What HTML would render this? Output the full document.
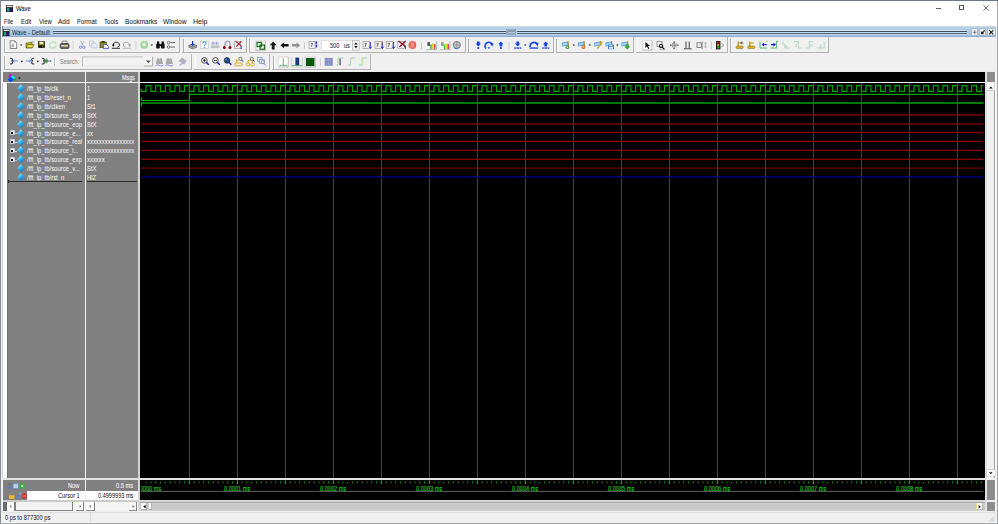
<!DOCTYPE html>
<html><head><meta charset="utf-8"><title>Wave</title>
<style>
html,body{margin:0;padding:0}
body{width:998px;height:524px;overflow:hidden;position:relative;background:#f0f0f0;font-family:"Liberation Sans",sans-serif}
.a{position:absolute}
.t{position:absolute;white-space:nowrap;line-height:1}
</style></head><body>
<div class="a" style="left:0px;top:0px;width:998px;height:26px;background:#fff"></div><div class="a" style="left:0px;top:0px;width:998px;height:1px;background:#6d7a86"></div><div class="a" style="left:0px;top:0px;width:1px;height:524px;background:#858b92"></div><div class="a" style="left:996.6px;top:1px;width:1.4px;height:524px;background:#a4a6ac"></div><svg class="a" style="left:5.5px;top:4.6px" width="7.2" height="7.2" viewBox="0 0 7.2 7.2"><rect x="0" y="0" width="7.2" height="7.2" fill="#1b1b1b"/><rect x="0.6" y="0.6" width="6" height="1.6" fill="#e8e8e8"/><rect x="1" y="3" width="2.6" height="3.6" fill="#20a080"/><rect x="3.6" y="3.6" width="2.8" height="3" fill="#2a1a80"/></svg><div class="t" style="left:15.8px;top:6px;font-size:6.3px;color:#111;transform:scaleX(0.9326);transform-origin:0 0;-webkit-text-stroke:0.05px #111">Wave</div><div class="a" style="left:935.5px;top:7.7px;width:5.4px;height:0.8px;background:#5a5a5a"></div><div class="a" style="left:959px;top:5.2px;width:5.3px;height:5.3px;border:0.8px solid #5a5a5a;box-sizing:border-box"></div><svg class="a" style="left:982.6px;top:4.9px" width="6" height="6" viewBox="0 0 6 6"><path d="M0.4 0.4L5.6 5.6M5.6 0.4L0.4 5.6" stroke="#505050" stroke-width="0.8"/></svg><div class="t" style="left:4.1px;top:19px;font-size:6.6px;color:#1a1a1a;transform:scaleX(0.8744);transform-origin:0 0;-webkit-text-stroke:0.05px #1a1a1a">File</div><div class="t" style="left:20.9px;top:19px;font-size:6.6px;color:#1a1a1a;transform:scaleX(0.8968);transform-origin:0 0;-webkit-text-stroke:0.05px #1a1a1a">Edit</div><div class="t" style="left:38.6px;top:19px;font-size:6.6px;color:#1a1a1a;transform:scaleX(0.8952);transform-origin:0 0;-webkit-text-stroke:0.05px #1a1a1a">View</div><div class="t" style="left:58.4px;top:19px;font-size:6.6px;color:#1a1a1a;transform:scaleX(0.9877);transform-origin:0 0;-webkit-text-stroke:0.05px #1a1a1a">Add</div><div class="t" style="left:77.2px;top:19px;font-size:6.6px;color:#1a1a1a;transform:scaleX(0.9473);transform-origin:0 0;-webkit-text-stroke:0.05px #1a1a1a">Format</div><div class="t" style="left:104.2px;top:19px;font-size:6.6px;color:#1a1a1a;transform:scaleX(0.9281);transform-origin:0 0;-webkit-text-stroke:0.05px #1a1a1a">Tools</div><div class="t" style="left:125.2px;top:19px;font-size:6.6px;color:#1a1a1a;transform:scaleX(0.9785);transform-origin:0 0;-webkit-text-stroke:0.05px #1a1a1a">Bookmarks</div><div class="t" style="left:163.3px;top:19px;font-size:6.6px;color:#1a1a1a;transform:scaleX(1.0011);transform-origin:0 0;-webkit-text-stroke:0.05px #1a1a1a">Window</div><div class="t" style="left:192.8px;top:19px;font-size:6.6px;color:#1a1a1a;transform:scaleX(1.0608);transform-origin:0 0;-webkit-text-stroke:0.05px #1a1a1a">Help</div><div class="a" style="left:1.5px;top:26px;width:994.5px;height:11px;background:linear-gradient(#bad2ea,#a2c0de)"></div><div class="a" style="left:1.5px;top:25.7px;width:994.5px;height:0.9px;background:#cfd6dc"></div><div class="a" style="left:1.5px;top:36.2px;width:994.5px;height:0.8px;background:#91adc9"></div><div class="a" style="left:1.5px;top:26px;width:1px;height:11px;background:#7d8e9e"></div><svg class="a" style="left:3.1px;top:28.8px" width="6.5" height="7.2" viewBox="0 0 6.5 7.2"><rect x="0" y="0" width="6.5" height="7.2" fill="#1b1b1b"/><rect x="0.6" y="0.6" width="5.3" height="1.5" fill="#e8e8e8"/><rect x="0.8" y="2.8" width="2.4" height="3.8" fill="#20a080"/><rect x="3.2" y="3.4" width="2.6" height="3.2" fill="#2a1a80"/></svg><div class="t" style="left:12.2px;top:30px;font-size:6.3px;color:#222a34;transform:scaleX(0.9148);transform-origin:0 0;">Wave - Default</div><div class="a" style="left:53.3px;top:29.9px;width:452.7px;height:1.0px;background:#d4e4f4"></div><div class="a" style="left:53.3px;top:30.6px;width:452.7px;height:1.2px;background:#3e4e62"></div><div class="a" style="left:53.3px;top:31.8px;width:452.7px;height:1.1px;background:#c4dcf2"></div><div class="a" style="left:53.3px;top:32.9px;width:452.7px;height:1.5px;background:#56687a"></div><div class="a" style="left:53.3px;top:34.4px;width:452.7px;height:0.9px;background:#b8cfe6"></div><div class="a" style="left:516.5px;top:29.9px;width:450.8px;height:1.0px;background:#d4e4f4"></div><div class="a" style="left:516.5px;top:30.6px;width:450.8px;height:1.2px;background:#3e4e62"></div><div class="a" style="left:516.5px;top:31.8px;width:450.8px;height:1.1px;background:#c4dcf2"></div><div class="a" style="left:516.5px;top:32.9px;width:450.8px;height:1.5px;background:#56687a"></div><div class="a" style="left:516.5px;top:34.4px;width:450.8px;height:0.9px;background:#b8cfe6"></div><div class="a" style="left:506.2px;top:29.2px;width:10.2px;height:6.2px;background:#a4c0dc;box-shadow:inset 0 0 0 0.6px #8aa2bc"></div><div class="a" style="left:507.4px;top:30.4px;width:7.8px;height:3.8px;background:#8a9cb2"></div><div class="a" style="left:508px;top:31.6px;width:6.6px;height:1px;background:#b6c8dc"></div><div class="a" style="left:971.7px;top:28.9px;width:5.4px;height:6.5px;background:#f2f2f2;box-shadow:0 0 0 0.5px #9aa8b6"></div><div class="a" style="left:980.1px;top:28.9px;width:5.4px;height:6.5px;background:#f2f2f2;box-shadow:0 0 0 0.5px #9aa8b6"></div><div class="a" style="left:988.1px;top:28.9px;width:6.5px;height:6.5px;background:#f2f2f2;box-shadow:0 0 0 0.5px #9aa8b6"></div><svg class="a" style="left:971.7px;top:28.9px" width="5.4" height="6.5" viewBox="0 0 5.4 6.5"><path d="M2.7 1.2V5.3M0.8 3.25H4.6" stroke="#666" stroke-width="0.8"/></svg><svg class="a" style="left:980.1px;top:28.9px" width="5.4" height="6.5" viewBox="0 0 5.4 6.5"><path d="M1 2.6H3.6V5.2H1Z" fill="#222"/><path d="M2.4 3.8L4.6 1.4M3.4 1.3H4.7V2.6" stroke="#222" stroke-width="0.8" fill="none"/></svg><svg class="a" style="left:988.1px;top:28.9px" width="6.5" height="6.5" viewBox="0 0 6.5 6.5"><path d="M1.2 1.2L5.3 5.3M5.3 1.2L1.2 5.3" stroke="#111" stroke-width="1.1"/></svg><div class="a" style="left:1.5px;top:37px;width:994.5px;height:34px;background:#f0f0f0"></div><div class="a" style="left:3.9px;top:37.2px;width:175.9px;height:16.099999999999994px;border-right:1px solid #b4b4b4;border-bottom:1px solid #b4b4b4;box-sizing:border-box;background:#f0f0f0"></div><div class="a" style="left:4.4px;top:38.7px;width:0.8px;height:13.099999999999994px;background:#b0b0b0"></div><div class="a" style="left:5.2px;top:38.7px;width:0.8px;height:13.099999999999994px;background:#fbfbfb"></div><div class="a" style="left:182.3px;top:37.2px;width:64.6px;height:16.099999999999994px;border-right:1px solid #b4b4b4;border-bottom:1px solid #b4b4b4;box-sizing:border-box;background:#f0f0f0"></div><div class="a" style="left:182.8px;top:38.7px;width:0.8px;height:13.099999999999994px;background:#b0b0b0"></div><div class="a" style="left:183.60000000000002px;top:38.7px;width:0.8px;height:13.099999999999994px;background:#fbfbfb"></div><div class="a" style="left:248.9px;top:37.2px;width:217.20000000000002px;height:16.099999999999994px;border-right:1px solid #b4b4b4;border-bottom:1px solid #b4b4b4;box-sizing:border-box;background:#f0f0f0"></div><div class="a" style="left:249.4px;top:38.7px;width:0.8px;height:13.099999999999994px;background:#b0b0b0"></div><div class="a" style="left:250.20000000000002px;top:38.7px;width:0.8px;height:13.099999999999994px;background:#fbfbfb"></div><div class="a" style="left:467.3px;top:37.2px;width:86.69999999999999px;height:16.099999999999994px;border-right:1px solid #b4b4b4;border-bottom:1px solid #b4b4b4;box-sizing:border-box;background:#f0f0f0"></div><div class="a" style="left:467.8px;top:38.7px;width:0.8px;height:13.099999999999994px;background:#b0b0b0"></div><div class="a" style="left:468.6px;top:38.7px;width:0.8px;height:13.099999999999994px;background:#fbfbfb"></div><div class="a" style="left:555.6px;top:37.2px;width:78.5px;height:16.099999999999994px;border-right:1px solid #b4b4b4;border-bottom:1px solid #b4b4b4;box-sizing:border-box;background:#f0f0f0"></div><div class="a" style="left:556.1px;top:38.7px;width:0.8px;height:13.099999999999994px;background:#b0b0b0"></div><div class="a" style="left:556.9px;top:38.7px;width:0.8px;height:13.099999999999994px;background:#fbfbfb"></div><div class="a" style="left:636px;top:37.2px;width:92px;height:16.099999999999994px;border-right:1px solid #b4b4b4;border-bottom:1px solid #b4b4b4;box-sizing:border-box;background:#f0f0f0"></div><div class="a" style="left:636.5px;top:38.7px;width:0.8px;height:13.099999999999994px;background:#b0b0b0"></div><div class="a" style="left:637.3px;top:38.7px;width:0.8px;height:13.099999999999994px;background:#fbfbfb"></div><div class="a" style="left:729.5px;top:37.2px;width:99.39999999999998px;height:16.099999999999994px;border-right:1px solid #b4b4b4;border-bottom:1px solid #b4b4b4;box-sizing:border-box;background:#f0f0f0"></div><div class="a" style="left:730.0px;top:38.7px;width:0.8px;height:13.099999999999994px;background:#b0b0b0"></div><div class="a" style="left:730.8px;top:38.7px;width:0.8px;height:13.099999999999994px;background:#fbfbfb"></div><div class="a" style="left:3.5px;top:54.2px;width:188.3px;height:16.299999999999997px;border-right:1px solid #b4b4b4;border-bottom:1px solid #b4b4b4;box-sizing:border-box;background:#f0f0f0"></div><div class="a" style="left:4.0px;top:55.7px;width:0.8px;height:13.299999999999997px;background:#b0b0b0"></div><div class="a" style="left:4.8px;top:55.7px;width:0.8px;height:13.299999999999997px;background:#fbfbfb"></div><div class="a" style="left:194px;top:54.2px;width:76px;height:16.299999999999997px;border-right:1px solid #b4b4b4;border-bottom:1px solid #b4b4b4;box-sizing:border-box;background:#f0f0f0"></div><div class="a" style="left:194.5px;top:55.7px;width:0.8px;height:13.299999999999997px;background:#b0b0b0"></div><div class="a" style="left:195.3px;top:55.7px;width:0.8px;height:13.299999999999997px;background:#fbfbfb"></div><div class="a" style="left:272.3px;top:54.2px;width:98.80000000000001px;height:16.299999999999997px;border-right:1px solid #b4b4b4;border-bottom:1px solid #b4b4b4;box-sizing:border-box;background:#f0f0f0"></div><div class="a" style="left:272.8px;top:55.7px;width:0.8px;height:13.299999999999997px;background:#b0b0b0"></div><div class="a" style="left:273.6px;top:55.7px;width:0.8px;height:13.299999999999997px;background:#fbfbfb"></div><!--ICONS--><svg class="a" style="left:0;top:0" width="998" height="524"><path d="M10.2,40.8 H14.8 L16.7,42.7 V48.5 H10.2 Z" fill="#fcfcfc" stroke="#6a6a6a" stroke-width="0.8"/><path d="M14.6,40.8 V42.9 H16.7" fill="none" stroke="#8a8a8a" stroke-width="0.6"/><path d="M11.6,47.3 L12.8,43.6 L14,47.3 M12.1,46 H13.6" fill="none" stroke="#707070" stroke-width="0.6"/><path d="M19.9,44.5 H22.5 L21.2,46.099999999999994 Z" fill="#222"/><path d="M26,43 H29 L29.6,42.3 H32 V47.8 H26 Z" fill="#c8c010" stroke="#3a3a10" stroke-width="0.6"/><path d="M26.3,47.8 L27.6,44.6 H34 L32.4,47.8 Z" fill="#e8e040" stroke="#3a3a10" stroke-width="0.6"/><path d="M32.3,41.2 L33.6,42.2 M33.2,40.8 V42" stroke="#666" stroke-width="0.5"/><rect x="38.1" y="41.2" width="6.8" height="6.6" fill="#1a1a00"/><rect x="38.8" y="41.8" width="5.4" height="3.6" fill="#8a8400"/><rect x="39.6" y="41.8" width="3.6" height="2.2" fill="#f4f4e8"/><rect x="40" y="46" width="3" height="1.6" fill="#111"/><rect x="42.4" y="46.2" width="0.7" height="1" fill="#ddd"/><path d="M49.4,45 A3.6 3.3 0 0 1 56,43.6" fill="none" stroke="#c0e2c0" stroke-width="1.5"/><path d="M56.4,45 A3.6 3.3 0 0 1 49.8,46.6" fill="none" stroke="#c0e2c0" stroke-width="1.5"/><path d="M54.6,42 L57.2,42.6 L55.8,44.8 Z M51.2,48.3 L48.6,47.6 L50,45.4 Z" fill="#c0e2c0"/><path d="M62.4,41 H66.8 L67.4,44 H61.8 Z" fill="#e8e8e8" stroke="#4a4a4a" stroke-width="0.6"/><path d="M60.2,44.6 Q60.2,43.6 61.4,43.6 H67.8 Q69,43.6 69,44.6 V47.6 Q69,48.4 68,48.4 H61.2 Q60.2,48.4 60.2,47.6 Z" fill="#6a6a6a" stroke="#2e2e2e" stroke-width="0.7"/><rect x="61.2" y="45.2" width="6.8" height="1.2" fill="#f0f0f0"/><rect x="64.2" y="45.4" width="1.6" height="1.2" fill="#d8c820"/><rect x="72.7" y="41" width="0.9" height="8" fill="#b8b8b8"/><rect x="73.60000000000001" y="41" width="0.6" height="8" fill="#fff"/><path d="M80.4,41 L82.8,45.2 M84.2,41 L81.8,45.2" stroke="#9a9a9a" stroke-width="0.7"/><circle cx="80.6" cy="47.2" r="1.2" fill="none" stroke="#6a78e8" stroke-width="0.8"/><circle cx="83.8" cy="47.2" r="1.2" fill="none" stroke="#6a78e8" stroke-width="0.8"/><rect x="89.4" y="41" width="4" height="5" fill="#f4f4f4" stroke="#b0b0b0" stroke-width="0.6"/><path d="M91.8,43 H95.4 L97.2,44.8 V47.8 H91.8 Z" fill="#e8ecf8" stroke="#a8b0d0" stroke-width="0.6"/><rect x="100" y="42" width="6.4" height="5.8" fill="#8a8a20" stroke="#303010" stroke-width="0.6"/><rect x="101.6" y="41" width="3" height="1.6" fill="#303010"/><path d="M103.4,44.6 H106.6 L108.6,46.4 V48.6 H103.4 Z" fill="#f0f0ff" stroke="#3a3ab8" stroke-width="0.7"/><path d="M113.6,45.6 A3 2.6 0 1 1 117.4,47.2" fill="none" stroke="#151515" stroke-width="0.9"/><path d="M111.8,44.6 L114.6,44.4 L113.2,47 Z" fill="#151515"/><rect x="111.8" y="47.8" width="8.2" height="0.9" fill="#151515"/><path d="M129.2,45.6 A3 2.6 0 1 0 125.4,47.2" fill="none" stroke="#9a9a9a" stroke-width="0.8"/><path d="M131,44.6 L128.2,44.4 L129.6,47 Z" fill="#9a9a9a"/><rect x="122.8" y="47.8" width="8.2" height="0.8" fill="#a8a8a8"/><rect x="135.7" y="41" width="0.9" height="8" fill="#b8b8b8"/><rect x="136.6" y="41" width="0.6" height="8" fill="#fff"/><circle cx="144.2" cy="44.8" r="4" fill="#a0d4a0"/><circle cx="143.6" cy="44" r="2.4" fill="#bce2bc"/><path d="M142.6,44.8 H145.8 M144.2,43.2 V46.4" stroke="#f8f8f8" stroke-width="1"/><path d="M150.5,44.5 H153.10000000000002 L151.8,46.099999999999994 Z" fill="#222"/><rect x="157" y="41.4" width="2.2" height="3" fill="#111"/><rect x="161.6" y="41.4" width="2.2" height="3" fill="#111"/><rect x="156.2" y="43.6" width="3.6" height="5" rx="0.8" fill="#111"/><rect x="161" y="43.6" width="3.6" height="5" rx="0.8" fill="#111"/><rect x="159.4" y="44.2" width="2" height="2" fill="#111"/><circle cx="168.6" cy="42.6" r="1.3" fill="none" stroke="#555" stroke-width="0.8"/><circle cx="168.6" cy="47" r="1.3" fill="none" stroke="#555" stroke-width="0.8"/><rect x="170.4" y="42.2" width="4.6" height="0.9" fill="#555"/><rect x="170.4" y="46.6" width="4.6" height="0.9" fill="#555"/><path d="M188.8,45.4 L192.6,43.6 L196.8,45.4 V47.2 L192.6,49 L188.8,47.2 Z" fill="#a8a8a8" stroke="#555" stroke-width="0.6"/><path d="M188.8,45.4 L192.6,47.2 L196.8,45.4" fill="none" stroke="#555" stroke-width="0.5"/><path d="M192.6,41 V45" stroke="#1838b8" stroke-width="1.2"/><path d="M191,44 H194.2 L192.6,46.2 Z" fill="#1838b8"/><rect x="200.2" y="41.4" width="8" height="7" fill="#fafafa" stroke="#b8b8b8" stroke-width="0.6"/><path d="M202.6,43.4 Q202.6,41.8 204.3,41.8 Q206,41.8 206,43.2 Q206,44.2 204.4,45 V46" fill="none" stroke="#3a8ae8" stroke-width="1"/><circle cx="204.4" cy="47.4" r="0.6" fill="#3a8ae8"/><rect x="211" y="44.6" width="8.4" height="3.6" fill="#c0c0c0"/><path d="M213,41.6 V45 M216.6,41.6 V45 M211.4,43 H219" stroke="#8080d8" stroke-width="0.6"/><rect x="211" y="45.4" width="8.4" height="0.6" fill="#e8e8e8"/><path d="M224.4,47 L225.6,42.2 Q226.6,41 228.2,41.2 Q230,41.6 230,43 V47" fill="none" stroke="#a8a8b8" stroke-width="1.5"/><path d="M227,42 V46" stroke="#d0d0e0" stroke-width="0.6"/><circle cx="224.4" cy="47.4" r="1.5" fill="#8a0c0c"/><circle cx="230" cy="47.6" r="1.5" fill="#8a0c0c"/><rect x="234.4" y="41.8" width="6.4" height="6.6" fill="#f0f0f0" stroke="#909090" stroke-width="0.6"/><path d="M235.6,41.2 L241.6,46.4 M241.4,41.2 L236.2,46.6" stroke="#a82020" stroke-width="1.1"/><path d="M241.2,46 V48.6 M240.2,47.8 L241.2,48.8 L242.2,47.8" stroke="#2040c0" stroke-width="0.7" fill="none"/><rect x="255.6" y="41" width="9.799999999999983" height="9.200000000000003" fill="#f0f0f0"/><path d="M255.6,50.2 V41 H265.4" stroke="#c8c8c8" stroke-width="0.6" fill="none"/><path d="M265.4,41 V50.2 H255.6" stroke="#a0a0a0" stroke-width="0.7" fill="none"/><rect x="257" y="42.4" width="4.4" height="4.2" fill="none" stroke="#106810" stroke-width="1.1"/><rect x="260" y="45" width="4.4" height="4.2" fill="none" stroke="#106810" stroke-width="1.1"/><path d="M273.2,41.6 L276.6,45.2 H274.6 V49.4 H271.8 V45.2 H269.8 Z" fill="#151515"/><path d="M280.4,45.2 L284,42.4 V44 H288.6 V46.6 H284 V48.2 Z" fill="#151515"/><path d="M300.2,45.2 L296.6,42.4 V44 H292 V46.6 H296.6 V48.2 Z" fill="#909090"/><rect x="304.3" y="42" width="0.9" height="7" fill="#b8b8b8"/><rect x="305.2" y="42" width="0.6" height="7" fill="#fff"/><rect x="309" y="41.6" width="6" height="7" fill="#f4f4f4" stroke="#888" stroke-width="0.6"/><path d="M310.8,43.4 H312.6 L311.2,46.8" fill="none" stroke="#333" stroke-width="0.7"/><rect x="315.6" y="41.4" width="1.6" height="2.4" fill="#2a3ab0"/><rect x="315.6" y="44.6" width="1.6" height="2.4" fill="#2a3ab0"/><rect x="315.6" y="47.2" width="1.6" height="1" fill="#9aa0d8"/><rect x="321.2" y="40.4" width="31" height="9.9" fill="#fff" stroke="#d0d0d0" stroke-width="0.6"/><rect x="352.6" y="40.6" width="6.6" height="9.6" fill="#f0f0f0" stroke="#b0b0b0" stroke-width="0.6"/><path d="M354.2,44.6 L355.9,42.4 L357.6,44.6 Z M354.2,46 L355.9,48.2 L357.6,46 Z" fill="#111"/><rect x="363" y="41.6" width="6.6" height="7" fill="#f2f2f2" stroke="#8a8a8a" stroke-width="0.6"/><path d="M364.6,43.4 H366.4 L365,46.8" fill="none" stroke="#333" stroke-width="0.7"/><path d="M370.4,42 V48 M369.2,46.8 L370.4,48.6 L371.6,46.8" stroke="#2030c0" stroke-width="0.9" fill="none"/><rect x="375" y="41.6" width="6.6" height="7" fill="#f2f2f2" stroke="#8a8a8a" stroke-width="0.6"/><path d="M376.6,43.4 H378.4 L377,46.8" fill="none" stroke="#333" stroke-width="0.7"/><path d="M382.4,42 V48 M381.2,46.8 L382.4,48.6 L383.6,46.8" stroke="#2030c0" stroke-width="0.9" fill="none"/><circle cx="382.4" cy="42.4" r="1" fill="#e06868"/><rect x="386.2" y="41.6" width="6.6" height="7" fill="#f2f2f2" stroke="#8a8a8a" stroke-width="0.6"/><path d="M387.8,43.4 H389.59999999999997 L388.2,46.8" fill="none" stroke="#333" stroke-width="0.7"/><path d="M393.59999999999997,42 V48 M392.4,46.8 L393.59999999999997,48.6 L394.8,46.8" stroke="#2030c0" stroke-width="0.9" fill="none"/><rect x="397.8" y="41.6" width="6.6" height="7" fill="#f2f2f2" stroke="#8a8a8a" stroke-width="0.6"/><path d="M398.6,41 L405.6,46.8 M405.6,41 L399.4,47" stroke="#801010" stroke-width="1.2"/><path d="M405.4,45.6 V48.8" stroke="#2030c0" stroke-width="0.9"/><circle cx="412.4" cy="45" r="3.9" fill="#e86050"/><path d="M410.6,43.2 H414.2 M410.6,45 H414.2 M410.6,46.8 H414.2" stroke="#f8c8c0" stroke-width="0.5"/><path d="M411.4,42.6 V47.4 M413.4,42.6 V47.4" stroke="#f8c8c0" stroke-width="0.5"/><rect x="421.3" y="42" width="0.9" height="7" fill="#b8b8b8"/><rect x="422.2" y="42" width="0.6" height="7" fill="#fff"/><rect x="426.4" y="41.6" width="9.6" height="8" fill="#fafafa"/><path d="M426.4,49.6 H436.4 M436.4,41.2 V49.6" stroke="#8a8a8a" stroke-width="0.6"/><rect x="427.4" y="42" width="2.6" height="4" fill="#555"/><rect x="430.2" y="44.4" width="1.6" height="4.8" fill="#40c040"/><rect x="432.0" y="43.2" width="1.6" height="6" fill="#e8d840"/><rect x="433.79999999999995" y="44" width="1.6" height="5.2" fill="#e04848"/><rect x="440" y="41.6" width="9.6" height="8" fill="#fafafa"/><path d="M440,49.6 H450 M450,41.2 V49.6" stroke="#8a8a8a" stroke-width="0.6"/><rect x="441" y="42" width="2.6" height="4" fill="#9a9a9a"/><rect x="443.8" y="44.4" width="1.6" height="4.8" fill="#40c040"/><rect x="445.6" y="43.2" width="1.6" height="6" fill="#e8d840"/><rect x="447.4" y="44" width="1.6" height="5.2" fill="#e04848"/><circle cx="456.8" cy="45" r="3.6" fill="#c8c8c8" stroke="#505050" stroke-width="0.7"/><path d="M453.4,45 H460.2 M456.8,41.4 V48.6" stroke="#707070" stroke-width="0.5"/><path d="M454.2,47.8 L456.2,48.8 L458.8,47.6" stroke="#3a7ae0" stroke-width="0.9" fill="none"/><path d="M477.0,41.4 H479.59999999999997 V43.6 H481.0 L478.29999999999995,46.4 L475.59999999999997,43.6 H477.0 Z" fill="#1440e8"/><circle cx="478.29999999999995" cy="48" r="1.1" fill="#1440e8"/><path d="M485.4,47.6 A3.6 3.6 0 0 1 492,44.4" fill="none" stroke="#1440e8" stroke-width="1.6"/><path d="M490,43.4 L493.6,43.2 L492.4,46.8 Z" fill="#1440e8"/><circle cx="485.6" cy="47.8" r="0.9" fill="#1440e8"/><circle cx="489" cy="47.8" r="0.9" fill="#1440e8"/><path d="M500.9,41.4 L503.6,44.2 H502.2 V46.4 H499.6 V44.2 H498.2 Z" fill="#1440e8"/><circle cx="500.9" cy="48" r="1.1" fill="#1440e8"/><rect x="508.7" y="41.5" width="0.9" height="7.5" fill="#b8b8b8"/><rect x="509.59999999999997" y="41.5" width="0.6" height="7.5" fill="#fff"/><path d="M516.4,41.4 H519.0 V43.6 H520.4 L517.6999999999999,46.4 L515.0,43.6 H516.4 Z" fill="#1440e8"/><rect x="514.1999999999999" y="47.4" width="7.2" height="1.3" fill="#1440e8"/><rect x="515.8" y="47.4" width="0.7" height="1.3" fill="#f0f0f0"/><rect x="519.0" y="47.4" width="0.7" height="1.3" fill="#f0f0f0"/><path d="M523.9000000000001,44.5 H526.5 L525.2,46.099999999999994 Z" fill="#222"/><path d="M530.2,47 A3.8 3.8 0 0 1 537,44" fill="none" stroke="#1440e8" stroke-width="1.6"/><path d="M535,42.8 L538.6,42.8 L537.4,46.4 Z" fill="#1440e8"/><rect x="529.6" y="47.4" width="8.6" height="1.3" fill="#1440e8"/><path d="M545.6999999999999,41.4 L548.4,44.2 H547.0 V46.4 H544.4 V44.2 H543.0 Z" fill="#1440e8"/><rect x="542.1999999999999" y="47.4" width="7.2" height="1.3" fill="#1440e8"/><rect x="543.8" y="47.4" width="0.7" height="1.3" fill="#f0f0f0"/><rect x="547.0" y="47.4" width="0.7" height="1.3" fill="#f0f0f0"/><path d="M561.8,42.6 L568.1999999999999,41.4 V45.6 L561.8,46.4 Z" fill="#5aa8e8"/><path d="M562.5999999999999,43.4 L567.4,42.4 V44.6 L562.5999999999999,45.4 Z" fill="#a8d4f8"/><path d="M568.0,41 L568.5999999999999,46" stroke="#b07828" stroke-width="0.9"/><circle cx="567.4" cy="47.2" r="1.9" fill="#48a048"/><circle cx="567.4" cy="47.2" r="0.8" fill="#e0f0e0"/><path d="M572.5,44.5 H575.0999999999999 L573.8,46.099999999999994 Z" fill="#222"/><path d="M577.8,42.6 L584.1999999999999,41.4 V45.6 L577.8,46.4 Z" fill="#5aa8e8"/><path d="M578.5999999999999,43.4 L583.4,42.4 V44.6 L578.5999999999999,45.4 Z" fill="#a8d4f8"/><path d="M584.0,41 L584.5999999999999,46" stroke="#b07828" stroke-width="0.9"/><circle cx="583.4" cy="47.2" r="1.9" fill="#e86a28"/><circle cx="583.4" cy="47.2" r="0.8" fill="#f8d8c0"/><path d="M588.5,44.5 H591.0999999999999 L589.8,46.099999999999994 Z" fill="#222"/><path d="M594.2,42.6 L600.6,41.4 V45.6 L594.2,46.4 Z" fill="#5aa8e8"/><path d="M595.0,43.4 L599.8000000000001,42.4 V44.6 L595.0,45.4 Z" fill="#a8d4f8"/><path d="M600.4000000000001,41 L601.0,46" stroke="#b07828" stroke-width="0.9"/><path d="M602.4000000000001,41.6 L597.4000000000001,48.6" stroke="#d8a838" stroke-width="1.6"/><path d="M605.4,42.6 L611.8,41.4 V45.6 L605.4,46.4 Z" fill="#5aa8e8"/><path d="M606.1999999999999,43.4 L611.0,42.4 V44.6 L606.1999999999999,45.4 Z" fill="#a8d4f8"/><path d="M611.6,41 L612.1999999999999,46" stroke="#b07828" stroke-width="0.9"/><rect x="608.0" y="44.6" width="6" height="4.6" fill="#3a7ad0"/><rect x="609.0" y="46.8" width="4" height="2" fill="#e8e8e8"/><rect x="609.0" y="44.8" width="3.6" height="1.2" fill="#c8d8f0"/><path d="M616.1,44.5 H618.6999999999999 L617.4,46.099999999999994 Z" fill="#222"/><path d="M621.4,42.6 L627.8,41.4 V45.6 L621.4,46.4 Z" fill="#5aa8e8"/><path d="M622.1999999999999,43.4 L627.0,42.4 V44.6 L622.1999999999999,45.4 Z" fill="#a8d4f8"/><path d="M627.6,41 L628.1999999999999,46" stroke="#b07828" stroke-width="0.9"/><path d="M625.6,44.6 H629.0 V46.4 H630.4 L627.3,49.4 L624.1999999999999,46.4 H625.6 Z" fill="#38a838"/><rect x="642.6" y="40.6" width="9.399999999999977" height="9.399999999999999" fill="#fff"/><path d="M642.6,50 V40.6 H652" stroke="#c8c8c8" stroke-width="0.6" fill="none"/><path d="M652,40.6 V50 H642.6" stroke="#a0a0a0" stroke-width="0.7" fill="none"/><path d="M645.4,42 L645.4,48 L647,46.6 L648.4,49 L649.4,48.4 L648,46 L650.2,46 Z" fill="#111"/><rect x="657" y="41.6" width="5" height="5" fill="none" stroke="#777" stroke-width="0.7"/><circle cx="661" cy="46" r="1.8" fill="none" stroke="#111" stroke-width="1"/><path d="M662.2,47.2 L664.4,49.4" stroke="#111" stroke-width="1.2"/><path d="M659,49.6 H665.4" stroke="#999" stroke-width="0.6"/><path d="M674.2,41.4 V49 M670.2,45.2 H678.4" stroke="#666" stroke-width="0.7"/><path d="M674.2,41 L673,42.4 H675.4 Z M674.2,49.4 L673,48 H675.4 Z M669.8,45.2 L671.2,44 V46.4 Z M678.8,45.2 L677.4,44 V46.4 Z" fill="#666"/><rect x="672.4" y="43.4" width="3.6" height="3.6" fill="none" stroke="#888" stroke-width="0.5"/><path d="M686,41.6 V48 M689.2,41.6 V48" stroke="#333" stroke-width="0.9"/><path d="M684,48.6 H691.6" stroke="#555" stroke-width="0.9"/><path d="M683.4,49.6 H692.4" stroke="#aaa" stroke-width="0.5"/><rect x="697" y="42.8" width="4.2" height="4.6" fill="none" stroke="#555" stroke-width="0.7"/><path d="M702.2,41.4 V49 M704.6,43 H706.4 M704.6,45 H706.4 M704.6,47 H706.4" stroke="#666" stroke-width="0.7"/><rect x="710.9" y="41.5" width="0.9" height="7.5" fill="#b8b8b8"/><rect x="711.8" y="41.5" width="0.6" height="7.5" fill="#fff"/><rect x="716" y="41" width="4.4" height="8.4" fill="#222"/><circle cx="718.2" cy="42.8" r="1.1" fill="#e02020"/><circle cx="718.2" cy="45.2" r="1.1" fill="#e0c020"/><circle cx="718.2" cy="47.6" r="1.1" fill="#20c020"/><path d="M721.2,43.2 L724,45.2 L721.2,47.2" fill="none" stroke="#9a9a9a" stroke-width="0.8"/><path d="M738.2,41.6 V46 M738.2,43 H742.2" stroke="#b89410" stroke-width="1.2"/><rect x="736.2" y="46" width="7" height="2.6" rx="0.8" fill="#d8b028" stroke="#7a6010" stroke-width="0.5"/><path d="M741.8000000000001,41.4 V44.4 M740.3000000000001,42.9 H743.3000000000001" stroke="#333" stroke-width="0.6"/><path d="M749.8,41.6 V46 M749.8,43 H753.8" stroke="#b89410" stroke-width="1.2"/><rect x="747.8" y="46" width="7" height="2.6" rx="0.8" fill="#d8b028" stroke="#7a6010" stroke-width="0.5"/><path d="M760,41.4 V48 H767.2 M766.4,41.2 H767.6" stroke="#58b878" stroke-width="1" fill="none"/><path d="M761.6,44.6 L764,42.8 V44 H766.6 V45.2 H764 V46.4 Z" fill="#1818e0"/><path d="M778.2,41.4 H776.6 V48 H770.6" stroke="#58b878" stroke-width="1" fill="none"/><path d="M776,44.6 L773.4,42.8 V44 H771 V45.2 H773.4 V46.4 Z" fill="#1818e0"/><path d="M782.8,41.4 V44 H784.8 V48 H789.8" stroke="#a8d8b0" stroke-width="0.9" fill="none"/><path d="M785.1999999999999,45.4 L787.1999999999999,46.4 L785.1999999999999,47.4" stroke="#b8b0f0" stroke-width="0.7" fill="none"/><path d="M794.0,41.6 H798.4 V48 H801.4" stroke="#a8d8b0" stroke-width="0.9" fill="none"/><path d="M796.8,44.4 L795.0,45.6 L796.8,46.8" stroke="#b8b0f0" stroke-width="0.7" fill="none"/><path d="M813.2,41.6 H809.2 V48 H805.6" stroke="#a8d8b0" stroke-width="0.9" fill="none"/><path d="M810.2,44.4 L812.2,45.6 L810.2,46.8" stroke="#b8b0f0" stroke-width="0.7" fill="none"/><path d="M824.2,41.4 V48 H817.2" stroke="#a8d8b0" stroke-width="0.9" fill="none"/><path d="M821.6,45.4 L819.6,46.4 L821.6,47.4" stroke="#b8b0f0" stroke-width="0.7" fill="none"/><path d="M10,58.2 Q12.6,58.2 12.6,59.800000000000004 Q12.6,61.0 11.2,61.0 Q12.6,61.0 12.6,62.400000000000006 Q12.6,64.0 10,64.0" fill="none" stroke="#3a3a3a" stroke-width="1.1"/><path d="M13,61 H17.8 M13,61 L14.6,59.6 M13,61 L14.6,62.4" stroke="#4a8ae8" stroke-width="0.9" fill="none"/><path d="M20.5,60.800000000000004 H23.1 L21.8,62.4 Z" fill="#222"/><path d="M34.2,58.2 Q31.6,58.2 31.6,59.8 Q31.6,61 33,61 Q31.6,61 31.6,62.4 Q31.6,64 34.2,64" fill="none" stroke="#3a3a3a" stroke-width="1.1"/><path d="M25.6,61 H30.6 M30.6,61 L29,59.6 M30.6,61 L29,62.4" stroke="#4a8ae8" stroke-width="0.9" fill="none"/><path d="M36.5,60.800000000000004 H39.099999999999994 L37.8,62.4 Z" fill="#222"/><path d="M41.8,58.2 Q44.4,58.2 44.4,59.800000000000004 Q44.4,61.0 43.0,61.0 Q44.4,61.0 44.4,62.400000000000006 Q44.4,64.0 41.8,64.0" fill="none" stroke="#3a3a3a" stroke-width="1.1"/><path d="M46.4,59 L48.6,61 L46.4,63 L44.2,61 Z" fill="#40a040" stroke="#2a602a" stroke-width="0.5"/><path d="M48.6,61 H50.2" stroke="#6a8ae8" stroke-width="0.8"/><circle cx="50.6" cy="61" r="0.7" fill="#2040e0"/><rect x="54.1" y="57.4" width="0.9" height="8.600000000000001" fill="#b8b8b8"/><rect x="55.0" y="57.4" width="0.6" height="8.600000000000001" fill="#fff"/><rect x="82.2" y="56.6" width="61" height="9.6" fill="#f2f2f2"/><path d="M82.5,66.2 V56.9 H143.2" stroke="#a8a8a8" stroke-width="0.7" fill="none"/><path d="M83.2,65.8 H143.2" stroke="#e0e0e0" stroke-width="0.5" fill="none"/><rect x="143.9" y="56.8" width="8.8" height="9.2" fill="#f4f4f4"/><path d="M143.9,66 H152.7 V56.8" stroke="#8a8a8a" stroke-width="0.7" fill="none"/><path d="M145.8,60.4 H150.8 L148.3,63.2 Z" fill="#555"/><path d="M155.8,64 L157.0,58.4 L158.8,58 L159.4,60 L160.0,58 L161.8,58.4 L163.0,64 Z" fill="#a8a8a8"/><path d="M155.4,65.6 Q157.4,64 159.4,65.4 Q161.4,66.8 163.4,65.2" stroke="#7080e8" stroke-width="0.9" fill="none"/><path d="M165.6,64 L166.79999999999998,58.4 L168.6,58 L169.2,60 L169.79999999999998,58 L171.6,58.4 L172.79999999999998,64 Z" fill="#a8a8a8"/><path d="M165.2,65.6 Q167.2,64 169.2,65.4 Q171.2,66.8 173.2,65.2" stroke="#7080e8" stroke-width="0.9" fill="none"/><path d="M178.6,61 L182,57.6 L186.6,61 L184,64.4 Z" fill="#b0b0b0"/><path d="M179.6,65.4 L183.4,62.2" stroke="#a8b8e8" stroke-width="1.4"/><circle cx="204.39999999999998" cy="60.4" r="2.8" fill="#f4f4f4" stroke="#222" stroke-width="0.8"/><circle cx="204.39999999999998" cy="60.4" r="1.1" fill="#111"/><path d="M206.2,62.2 L208.79999999999998,64.8" stroke="#1a1ac8" stroke-width="1.4"/><circle cx="215.39999999999998" cy="60.4" r="2.8" fill="#f4f4f4" stroke="#222" stroke-width="0.8"/><rect x="214.0" y="60" width="2.8" height="0.8" fill="#111"/><path d="M217.2,62.2 L219.79999999999998,64.8" stroke="#1a1ac8" stroke-width="1.4"/><circle cx="227.0" cy="60.4" r="2.8" fill="#1a4a8a" stroke="#222" stroke-width="0.6"/><circle cx="226.20000000000002" cy="59.6" r="0.9" fill="#5a8ad0"/><path d="M228.8,62.2 L231.4,64.8" stroke="#1a1ac8" stroke-width="1.4"/><rect x="234.8" y="63" width="7.4" height="2.8" rx="0.8" fill="none" stroke="#d8a818" stroke-width="0.9"/><path d="M236.60000000000002,63 V59.4 M236.60000000000002,60.4 H238.8" stroke="#d8a818" stroke-width="0.9" fill="none"/><circle cx="240.4" cy="58.8" r="1.6" fill="#f4f4f4" stroke="#333" stroke-width="0.6"/><path d="M241.60000000000002,60 L243.0,61.6" stroke="#1a1ac8" stroke-width="1"/><rect x="246.2" y="63.2" width="3.6" height="2.6" rx="1" fill="none" stroke="#d8a818" stroke-width="0.9"/><rect x="250.79999999999998" y="63.2" width="3.6" height="2.6" rx="1" fill="none" stroke="#d8a818" stroke-width="0.9"/><path d="M248.0,63 V60.6 H252.2 M252.6,63 V61" stroke="#d8a818" stroke-width="0.9" fill="none"/><circle cx="251.79999999999998" cy="58.8" r="1.6" fill="#f4f4f4" stroke="#333" stroke-width="0.6"/><path d="M253.0,60 L254.39999999999998,61.6" stroke="#1a1ac8" stroke-width="1"/><rect x="257.4" y="57.4" width="4.6" height="4" fill="#e8eef8" stroke="#7a8ae0" stroke-width="0.7"/><rect x="259.6" y="59.6" width="4.6" height="4" fill="#e8eef8" stroke="#7a8ae0" stroke-width="0.7"/><circle cx="262.8" cy="62.2" r="1.6" fill="#f8f8f8" stroke="#555" stroke-width="0.6"/><path d="M264,63.6 L265.8,65.4" stroke="#5a5ae0" stroke-width="0.9"/><rect x="278.4" y="57" width="9.800000000000011" height="10" fill="#fff"/><path d="M278.4,67 V57 H288.2" stroke="#c8c8c8" stroke-width="0.6" fill="none"/><path d="M288.2,57 V67 H278.4" stroke="#a0a0a0" stroke-width="0.7" fill="none"/><path d="M283.3,58.4 V65.2 M279.4,65.4 H287.4" stroke="#40a860" stroke-width="0.8"/><path d="M291.4,57 V67 H302.4 V57" stroke="#aaa" stroke-width="0.5" fill="none"/><rect x="295.4" y="57.6" width="3.8" height="7.8" fill="#1a3a7a"/><path d="M292,65.4 H302" stroke="#40a860" stroke-width="0.8"/><rect x="305" y="57" width="10.199999999999989" height="10" fill="#f0f0f0"/><path d="M305,67 V57 H315.2" stroke="#c8c8c8" stroke-width="0.6" fill="none"/><path d="M315.2,57 V67 H305" stroke="#a0a0a0" stroke-width="0.7" fill="none"/><rect x="306" y="58" width="8.4" height="8" fill="#0a5a0a"/><rect x="319.9" y="58" width="0.9" height="8" fill="#b8b8b8"/><rect x="320.79999999999995" y="58" width="0.6" height="8" fill="#fff"/><rect x="324.6" y="57.8" width="8.2" height="8" fill="#8a90c8"/><path d="M328.7,57.8 V65.8" stroke="#a8a8c0" stroke-width="0.6"/><path d="M336.4,65.2 H338 V58 H343.4" stroke="#88d0a0" stroke-width="0.8" fill="none"/><rect x="338.6" y="58" width="1" height="7.2" fill="#e8e890"/><rect x="339.4" y="58.6" width="1.4" height="6.6" fill="#5a5aa0"/><path d="M347.8,65.2 H350.6 V58 H355.2" stroke="#88d0a0" stroke-width="0.8" fill="none"/><path d="M358.8,65.2 H362 V58 H367" stroke="#88d0a0" stroke-width="0.8" fill="none"/><rect x="362.6" y="58.4" width="1" height="6.8" fill="#e8e890"/></svg><div class="t" style="left:60px;top:59px;font-size:6.4px;color:#8c8c8c;transform:scaleX(0.8705);transform-origin:0 0;-webkit-text-stroke:0.1px #8c8c8c">Search:</div><div class="t" style="left:330.2px;top:43px;font-size:6.3px;color:#3a3a50;transform:scaleX(0.89);transform-origin:0 0;-webkit-text-stroke:0.1px #3a3a50">500</div><div class="t" style="left:344.2px;top:43px;font-size:6.3px;color:#3a3a50;transform:scaleX(0.89);transform-origin:0 0;-webkit-text-stroke:0.1px #3a3a50">us</div><div class="a" style="left:1.5px;top:70.6px;width:994.5px;height:0.8px;background:#c4c4c4"></div><div class="a" style="left:1.5px;top:71.4px;width:994.5px;height:0.8px;background:#ececec"></div><div class="a" style="left:2.5px;top:72px;width:82.5px;height:9.5px;background:#808080"></div><div class="a" style="left:86.3px;top:72px;width:51.7px;height:9.5px;background:#808080"></div><div class="a" style="left:140px;top:72px;width:844.9px;height:9.5px;background:#000"></div><div class="a" style="left:85px;top:72px;width:1.3px;height:428px;background:#f4f4f4"></div><div class="a" style="left:137px;top:72px;width:1px;height:428px;background:#787878"></div><div class="a" style="left:138px;top:72px;width:2px;height:428px;background:#d4d4d4"></div><div class="a" style="left:2.5px;top:81.5px;width:982.4px;height:1.5px;background:#f2f2f2"></div><div class="t" style="left:122.4px;top:75px;font-size:6.4px;color:#f0f0f0;transform:scaleX(0.8371);transform-origin:0 0;-webkit-text-stroke:0.1px #f0f0f0">Msgs</div><svg class="a" style="left:6.5px;top:72.6px" width="11" height="10" viewBox="0 0 11 10"><path d="M3.2 0.6L5.6 2.2L3.6 4.6L1.2 3.2Z" fill="#c018d8"/><path d="M12.2 0 L12.2 0Z"/><path d="M6.8 3.2L9.6 6.4L7 8.2L6.2 5.2Z" fill="#10b028"/><path d="M5.4 2.2L8.2 4.4L6.2 6.6L3.6 4.4Z" fill="#10f0ff"/><path d="M3.6 3.8L6.8 6.6L3.6 9.6L0.6 6.6Z" fill="#0a48f0"/></svg><svg class="a" style="left:17.6px;top:77.2px" width="3" height="2.6" viewBox="0 0 3 2.6"><path d="M0.2 0.4H2.8L1.5 2.2Z" fill="#111"/></svg><div class="a" style="left:2.5px;top:83px;width:82.5px;height:395px;background:#808080"></div><div class="a" style="left:1px;top:83px;width:1px;height:395px;background:#f0f0f0"></div><div class="a" style="left:2px;top:83px;width:1px;height:395px;background:#d0d0d0"></div><div class="a" style="left:3px;top:83px;width:4px;height:395px;background:#fcfcfc"></div><div class="a" style="left:7px;top:83px;width:1px;height:395px;background:#6e6e6e"></div><div class="a" style="left:86.3px;top:83px;width:51.7px;height:395px;background:#808080"></div><div class="a" style="left:140px;top:83px;width:844.9px;height:395px;background:#000"></div><div class="a" style="left:2.5px;top:478px;width:982.4px;height:2px;background:#e2e2e2"></div><svg width="0" height="0" style="position:absolute"><defs><linearGradient id="dg" x1="0.2" y1="0" x2="0.8" y2="1"><stop offset="0" stop-color="#c0f0ff"/><stop offset="0.45" stop-color="#30b4f0"/><stop offset="1" stop-color="#0868b0"/></linearGradient></defs></svg><svg class="a" style="left:17.2px;top:84.4px" width="7.8" height="8.4" viewBox="0 0 7.8 8.4"><path d="M3.9 0.2L7.6 4.2L3.9 8.2L0.2 4.2Z" fill="url(#dg)"/></svg><div class="t" style="left:27.2px;top:86px;font-size:6.6px;color:#f4f4f4;transform:scaleX(0.895);transform-origin:0 0;-webkit-text-stroke:0.04px #f4f4f4">/fft_ip_tb/clk</div><div class="t" style="left:87.2px;top:86px;font-size:6.6px;color:#f4f4f4;transform:scaleX(0.895);transform-origin:0 0;-webkit-text-stroke:0.04px #f4f4f4">1</div><svg class="a" style="left:17.2px;top:93.27px" width="7.8" height="8.4" viewBox="0 0 7.8 8.4"><path d="M3.9 0.2L7.6 4.2L3.9 8.2L0.2 4.2Z" fill="url(#dg)"/></svg><div class="t" style="left:27.2px;top:95px;font-size:6.6px;color:#f4f4f4;transform:scaleX(0.895);transform-origin:0 0;-webkit-text-stroke:0.04px #f4f4f4">/fft_ip_tb/reset_n</div><div class="t" style="left:87.2px;top:95px;font-size:6.6px;color:#f4f4f4;transform:scaleX(0.895);transform-origin:0 0;-webkit-text-stroke:0.04px #f4f4f4">1</div><svg class="a" style="left:17.2px;top:102.14px" width="7.8" height="8.4" viewBox="0 0 7.8 8.4"><path d="M3.9 0.2L7.6 4.2L3.9 8.2L0.2 4.2Z" fill="url(#dg)"/></svg><div class="t" style="left:27.2px;top:104px;font-size:6.6px;color:#f4f4f4;transform:scaleX(0.895);transform-origin:0 0;-webkit-text-stroke:0.04px #f4f4f4">/fft_ip_tb/clken</div><div class="t" style="left:87.2px;top:104px;font-size:6.6px;color:#f4f4f4;transform:scaleX(0.895);transform-origin:0 0;-webkit-text-stroke:0.04px #f4f4f4">St1</div><svg class="a" style="left:17.2px;top:111.01px" width="7.8" height="8.4" viewBox="0 0 7.8 8.4"><path d="M3.9 0.2L7.6 4.2L3.9 8.2L0.2 4.2Z" fill="url(#dg)"/></svg><div class="t" style="left:27.2px;top:113px;font-size:6.6px;color:#f4f4f4;transform:scaleX(0.895);transform-origin:0 0;-webkit-text-stroke:0.04px #f4f4f4">/fft_ip_tb/source_sop</div><div class="t" style="left:87.2px;top:113px;font-size:6.6px;color:#f4f4f4;transform:scaleX(0.895);transform-origin:0 0;-webkit-text-stroke:0.04px #f4f4f4">StX</div><svg class="a" style="left:17.2px;top:119.88px" width="7.8" height="8.4" viewBox="0 0 7.8 8.4"><path d="M3.9 0.2L7.6 4.2L3.9 8.2L0.2 4.2Z" fill="url(#dg)"/></svg><div class="t" style="left:27.2px;top:122px;font-size:6.6px;color:#f4f4f4;transform:scaleX(0.895);transform-origin:0 0;-webkit-text-stroke:0.04px #f4f4f4">/fft_ip_tb/source_eop</div><div class="t" style="left:87.2px;top:122px;font-size:6.6px;color:#f4f4f4;transform:scaleX(0.895);transform-origin:0 0;-webkit-text-stroke:0.04px #f4f4f4">StX</div><svg class="a" style="left:17.2px;top:128.75px" width="7.8" height="8.4" viewBox="0 0 7.8 8.4"><path d="M3.9 0.2L7.6 4.2L3.9 8.2L0.2 4.2Z" fill="url(#dg)"/></svg><div class="t" style="left:27.2px;top:131px;font-size:6.6px;color:#f4f4f4;transform:scaleX(0.895);transform-origin:0 0;-webkit-text-stroke:0.04px #f4f4f4">/fft_ip_tb/source_e...</div><div class="t" style="left:87.2px;top:131px;font-size:6.6px;color:#f4f4f4;transform:scaleX(0.895);transform-origin:0 0;-webkit-text-stroke:0.04px #f4f4f4">xx</div><div class="a" style="left:9.5px;top:130.3px;width:5px;height:5px;background:#f4f4f8;box-shadow:inset 0 0 0 0.6px #a8aec4"></div><div class="a" style="left:11.2px;top:132px;width:1.6px;height:1.6px;background:#1a1a1a"></div><div class="a" style="left:14.5px;top:132.8px;width:2.5px;height:0.7px;background:#c8c8c8"></div><svg class="a" style="left:17.2px;top:137.62px" width="7.8" height="8.4" viewBox="0 0 7.8 8.4"><path d="M3.9 0.2L7.6 4.2L3.9 8.2L0.2 4.2Z" fill="url(#dg)"/></svg><div class="t" style="left:27.2px;top:139px;font-size:6.6px;color:#f4f4f4;transform:scaleX(0.895);transform-origin:0 0;-webkit-text-stroke:0.04px #f4f4f4">/fft_ip_tb/source_real</div><div class="t" style="left:87.2px;top:139px;font-size:6.6px;color:#f4f4f4;transform:scaleX(0.895);transform-origin:0 0;-webkit-text-stroke:0.04px #f4f4f4">xxxxxxxxxxxxxxxx</div><div class="a" style="left:9.5px;top:139.3px;width:5px;height:5px;background:#f4f4f8;box-shadow:inset 0 0 0 0.6px #a8aec4"></div><div class="a" style="left:11.2px;top:141px;width:1.6px;height:1.6px;background:#1a1a1a"></div><div class="a" style="left:14.5px;top:141.8px;width:2.5px;height:0.7px;background:#c8c8c8"></div><svg class="a" style="left:17.2px;top:146.49px" width="7.8" height="8.4" viewBox="0 0 7.8 8.4"><path d="M3.9 0.2L7.6 4.2L3.9 8.2L0.2 4.2Z" fill="url(#dg)"/></svg><div class="t" style="left:27.2px;top:148px;font-size:6.6px;color:#f4f4f4;transform:scaleX(0.895);transform-origin:0 0;-webkit-text-stroke:0.04px #f4f4f4">/fft_ip_tb/source_i...</div><div class="t" style="left:87.2px;top:148px;font-size:6.6px;color:#f4f4f4;transform:scaleX(0.895);transform-origin:0 0;-webkit-text-stroke:0.04px #f4f4f4">xxxxxxxxxxxxxxxx</div><div class="a" style="left:9.5px;top:148.3px;width:5px;height:5px;background:#f4f4f8;box-shadow:inset 0 0 0 0.6px #a8aec4"></div><div class="a" style="left:11.2px;top:150px;width:1.6px;height:1.6px;background:#1a1a1a"></div><div class="a" style="left:14.5px;top:150.8px;width:2.5px;height:0.7px;background:#c8c8c8"></div><svg class="a" style="left:17.2px;top:155.36px" width="7.8" height="8.4" viewBox="0 0 7.8 8.4"><path d="M3.9 0.2L7.6 4.2L3.9 8.2L0.2 4.2Z" fill="url(#dg)"/></svg><div class="t" style="left:27.2px;top:157px;font-size:6.6px;color:#f4f4f4;transform:scaleX(0.895);transform-origin:0 0;-webkit-text-stroke:0.04px #f4f4f4">/fft_ip_tb/source_exp</div><div class="t" style="left:87.2px;top:157px;font-size:6.6px;color:#f4f4f4;transform:scaleX(0.895);transform-origin:0 0;-webkit-text-stroke:0.04px #f4f4f4">xxxxxx</div><div class="a" style="left:9.5px;top:157.3px;width:5px;height:5px;background:#f4f4f8;box-shadow:inset 0 0 0 0.6px #a8aec4"></div><div class="a" style="left:11.2px;top:159px;width:1.6px;height:1.6px;background:#1a1a1a"></div><div class="a" style="left:14.5px;top:159.8px;width:2.5px;height:0.7px;background:#c8c8c8"></div><svg class="a" style="left:17.2px;top:164.23px" width="7.8" height="8.4" viewBox="0 0 7.8 8.4"><path d="M3.9 0.2L7.6 4.2L3.9 8.2L0.2 4.2Z" fill="url(#dg)"/></svg><div class="t" style="left:27.2px;top:166px;font-size:6.6px;color:#f4f4f4;transform:scaleX(0.895);transform-origin:0 0;-webkit-text-stroke:0.04px #f4f4f4">/fft_ip_tb/source_v...</div><div class="t" style="left:87.2px;top:166px;font-size:6.6px;color:#f4f4f4;transform:scaleX(0.895);transform-origin:0 0;-webkit-text-stroke:0.04px #f4f4f4">StX</div><svg class="a" style="left:17.2px;top:173.1px" width="7.8" height="8.4" viewBox="0 0 7.8 8.4"><path d="M3.9 0.2L7.6 4.2L3.9 8.2L0.2 4.2Z" fill="url(#dg)"/></svg><div class="t" style="left:27.2px;top:175px;font-size:6.6px;color:#f4f4f4;transform:scaleX(0.895);transform-origin:0 0;-webkit-text-stroke:0.04px #f4f4f4">/fft_ip_tb/rst_n</div><div class="t" style="left:87.2px;top:175px;font-size:6.6px;color:#f4f4f4;transform:scaleX(0.895);transform-origin:0 0;-webkit-text-stroke:0.04px #f4f4f4">HiZ</div><div class="a" style="left:8px;top:181px;width:74.4px;height:0.9px;background:#2e2e2e"></div><div class="a" style="left:7.8px;top:180.2px;width:0.9px;height:2.4px;background:#2e2e2e"></div><div class="a" style="left:87px;top:181px;width:49.5px;height:0.9px;background:#2e2e2e"></div><svg class="a" style="left:0;top:0" width="998" height="524"><rect x="189" y="83" width="1" height="395" fill="#444444"/><rect x="237" y="83" width="1" height="395" fill="#444444"/><rect x="285" y="83" width="1" height="395" fill="#444444"/><rect x="333" y="83" width="1" height="395" fill="#444444"/><rect x="381" y="83" width="1" height="395" fill="#444444"/><rect x="429" y="83" width="1" height="395" fill="#444444"/><rect x="477" y="83" width="1" height="395" fill="#444444"/><rect x="525" y="83" width="1" height="395" fill="#444444"/><rect x="573" y="83" width="1" height="395" fill="#444444"/><rect x="621" y="83" width="1" height="395" fill="#444444"/><rect x="669" y="83" width="1" height="395" fill="#444444"/><rect x="717" y="83" width="1" height="395" fill="#444444"/><rect x="765" y="83" width="1" height="395" fill="#444444"/><rect x="813" y="83" width="1" height="395" fill="#444444"/><rect x="861" y="83" width="1" height="395" fill="#444444"/><rect x="909" y="83" width="1" height="395" fill="#444444"/><rect x="957" y="83" width="1" height="395" fill="#444444"/><path d="M141.3,88.8 V91.4H146.10V85.6H150.90V91.4H155.70V85.6H160.50V91.4H165.30V85.6H170.10V91.4H174.90V85.6H179.70V91.4H184.50V85.6H189.30V91.4H194.10V85.6H198.90V91.4H203.70V85.6H208.50V91.4H213.30V85.6H218.10V91.4H222.90V85.6H227.70V91.4H232.50V85.6H237.30V91.4H242.10V85.6H246.90V91.4H251.70V85.6H256.50V91.4H261.30V85.6H266.10V91.4H270.90V85.6H275.70V91.4H280.50V85.6H285.30V91.4H290.10V85.6H294.90V91.4H299.70V85.6H304.50V91.4H309.30V85.6H314.10V91.4H318.90V85.6H323.70V91.4H328.50V85.6H333.30V91.4H338.10V85.6H342.90V91.4H347.70V85.6H352.50V91.4H357.30V85.6H362.10V91.4H366.90V85.6H371.70V91.4H376.50V85.6H381.30V91.4H386.10V85.6H390.90V91.4H395.70V85.6H400.50V91.4H405.30V85.6H410.10V91.4H414.90V85.6H419.70V91.4H424.50V85.6H429.30V91.4H434.10V85.6H438.90V91.4H443.70V85.6H448.50V91.4H453.30V85.6H458.10V91.4H462.90V85.6H467.70V91.4H472.50V85.6H477.30V91.4H482.10V85.6H486.90V91.4H491.70V85.6H496.50V91.4H501.30V85.6H506.10V91.4H510.90V85.6H515.70V91.4H520.50V85.6H525.30V91.4H530.10V85.6H534.90V91.4H539.70V85.6H544.50V91.4H549.30V85.6H554.10V91.4H558.90V85.6H563.70V91.4H568.50V85.6H573.30V91.4H578.10V85.6H582.90V91.4H587.70V85.6H592.50V91.4H597.30V85.6H602.10V91.4H606.90V85.6H611.70V91.4H616.50V85.6H621.30V91.4H626.10V85.6H630.90V91.4H635.70V85.6H640.50V91.4H645.30V85.6H650.10V91.4H654.90V85.6H659.70V91.4H664.50V85.6H669.30V91.4H674.10V85.6H678.90V91.4H683.70V85.6H688.50V91.4H693.30V85.6H698.10V91.4H702.90V85.6H707.70V91.4H712.50V85.6H717.30V91.4H722.10V85.6H726.90V91.4H731.70V85.6H736.50V91.4H741.30V85.6H746.10V91.4H750.90V85.6H755.70V91.4H760.50V85.6H765.30V91.4H770.10V85.6H774.90V91.4H779.70V85.6H784.50V91.4H789.30V85.6H794.10V91.4H798.90V85.6H803.70V91.4H808.50V85.6H813.30V91.4H818.10V85.6H822.90V91.4H827.70V85.6H832.50V91.4H837.30V85.6H842.10V91.4H846.90V85.6H851.70V91.4H856.50V85.6H861.30V91.4H866.10V85.6H870.90V91.4H875.70V85.6H880.50V91.4H885.30V85.6H890.10V91.4H894.90V85.6H899.70V91.4H904.50V85.6H909.30V91.4H914.10V85.6H918.90V91.4H923.70V85.6H928.50V91.4H933.30V85.6H938.10V91.4H942.90V85.6H947.70V91.4H952.50V85.6H957.30V91.4H962.10V85.6H966.90V91.4H971.70V85.6H976.50V91.4H981.30V85.6H983.4" stroke="#00a400" stroke-width="1.15" fill="none"/><path d="M141.3,97.6 V100.5 H189.30 V94.4 H983.4" stroke="#00a400" stroke-width="1.15" fill="none"/><path d="M141.3,106.6 V103 H983.4" stroke="#00a400" stroke-width="1.3" fill="none"/><rect x="141.3" y="114.3" width="842.0999999999999" height="1.3" fill="#8c0606"/><rect x="141.3" y="123.25" width="842.0999999999999" height="1.3" fill="#8c0606"/><rect x="141.3" y="131.85" width="842.0999999999999" height="1.3" fill="#8c0606"/><rect x="141.3" y="140.79999999999998" width="842.0999999999999" height="1.3" fill="#8c0606"/><rect x="141.3" y="149.75" width="842.0999999999999" height="1.3" fill="#8c0606"/><rect x="141.3" y="158.65" width="842.0999999999999" height="1.3" fill="#8c0606"/><rect x="141.3" y="167.45" width="842.0999999999999" height="1.3" fill="#6e0303"/><rect x="141.3" y="176.25" width="842.0999999999999" height="1.3" fill="#000090"/></svg><div class="a" style="left:2.5px;top:480px;width:82.5px;height:20px;background:#808080"></div><div class="a" style="left:86.3px;top:480px;width:51.7px;height:20px;background:#808080"></div><div class="a" style="left:140px;top:480px;width:844.9px;height:20px;background:#000"></div><div class="a" style="left:27.4px;top:490.8px;width:57.6px;height:9px;background:#fff"></div><div class="a" style="left:86.3px;top:490.8px;width:51.7px;height:9px;background:#fff"></div><div class="t" style="left:68.3px;top:483px;font-size:6.4px;color:#f0f0f0;transform:scaleX(0.8825);transform-origin:0 0;-webkit-text-stroke:0.1px #f0f0f0">Now</div><div class="t" style="left:116.1px;top:483px;font-size:6.4px;color:#f0f0f0;transform:scaleX(0.8955);transform-origin:0 0;-webkit-text-stroke:0.1px #f0f0f0">0.5 ms</div><div class="t" style="left:58.4px;top:493px;font-size:6.6px;color:#101010;transform:scaleX(0.8614);transform-origin:0 0;">Cursor 1</div><div class="t" style="left:97.9px;top:493px;font-size:6.6px;color:#101010;transform:scaleX(0.8463);transform-origin:0 0;">0.4999993 ms</div><svg class="a" style="left:7.2px;top:482.5px" width="18" height="6.5" viewBox="0 0 18 6.5"><rect x="0.5" y="3.5" width="4.5" height="2" fill="#5a7ab0"/><path d="M1 2.5L2.5 0.5M3 2.5L4.5 0.5" stroke="#505050" stroke-width="0.6"/><rect x="6" y="0.2" width="5.6" height="5.6" fill="#6c9ad8"/><rect x="6.6" y="1.2" width="4.4" height="3.8" fill="#b8d4f0"/><circle cx="15.2" cy="3.1" r="2.8" fill="#36b03a"/><circle cx="15.2" cy="3.1" r="1.1" fill="#d8f0d8"/></svg><svg class="a" style="left:8.6px;top:491.6px" width="18.5" height="7.5" viewBox="0 0 18.5 7.5"><rect x="0" y="3.2" width="5.5" height="4" fill="#e8b828"/><path d="M1.2 3.2V1.8A1.6 1.6 0 0 1 4.4 1.8V3.2" stroke="#909090" stroke-width="0.7" fill="none"/><path d="M6.6 6.8L10.6 2.2" stroke="#4a80d8" stroke-width="1.3"/><circle cx="11" cy="1.8" r="1.2" fill="#90a0b0"/><circle cx="15.6" cy="4" r="2.7" fill="#e02828"/><rect x="14.2" y="3.6" width="2.8" height="0.9" fill="#f0c0c0"/></svg><svg class="a" style="left:0;top:0" width="998" height="524"><rect x="145.65" y="481.5" width="0.9" height="1.9" fill="#1a9a1a"/><rect x="150.45" y="481.5" width="0.9" height="1.9" fill="#1a9a1a"/><rect x="155.25" y="481.5" width="0.9" height="1.9" fill="#1a9a1a"/><rect x="160.05" y="481.5" width="0.9" height="1.9" fill="#1a9a1a"/><rect x="164.85" y="481.5" width="0.9" height="1.9" fill="#1a9a1a"/><rect x="169.65" y="481.5" width="0.9" height="1.9" fill="#1a9a1a"/><rect x="174.45" y="481.5" width="0.9" height="1.9" fill="#1a9a1a"/><rect x="179.25" y="481.5" width="0.9" height="1.9" fill="#1a9a1a"/><rect x="184.05" y="481.5" width="0.9" height="1.9" fill="#1a9a1a"/><rect x="188.80" y="480.4" width="1" height="3.6" fill="#22c822"/><rect x="193.65" y="481.5" width="0.9" height="1.9" fill="#1a9a1a"/><rect x="198.45" y="481.5" width="0.9" height="1.9" fill="#1a9a1a"/><rect x="203.25" y="481.5" width="0.9" height="1.9" fill="#1a9a1a"/><rect x="208.05" y="481.5" width="0.9" height="1.9" fill="#1a9a1a"/><rect x="212.85" y="481.5" width="0.9" height="1.9" fill="#1a9a1a"/><rect x="217.65" y="481.5" width="0.9" height="1.9" fill="#1a9a1a"/><rect x="222.45" y="481.5" width="0.9" height="1.9" fill="#1a9a1a"/><rect x="227.25" y="481.5" width="0.9" height="1.9" fill="#1a9a1a"/><rect x="232.05" y="481.5" width="0.9" height="1.9" fill="#1a9a1a"/><rect x="236.80" y="480.4" width="1" height="3.6" fill="#22c822"/><rect x="241.65" y="481.5" width="0.9" height="1.9" fill="#1a9a1a"/><rect x="246.45" y="481.5" width="0.9" height="1.9" fill="#1a9a1a"/><rect x="251.25" y="481.5" width="0.9" height="1.9" fill="#1a9a1a"/><rect x="256.05" y="481.5" width="0.9" height="1.9" fill="#1a9a1a"/><rect x="260.85" y="481.5" width="0.9" height="1.9" fill="#1a9a1a"/><rect x="265.65" y="481.5" width="0.9" height="1.9" fill="#1a9a1a"/><rect x="270.45" y="481.5" width="0.9" height="1.9" fill="#1a9a1a"/><rect x="275.25" y="481.5" width="0.9" height="1.9" fill="#1a9a1a"/><rect x="280.05" y="481.5" width="0.9" height="1.9" fill="#1a9a1a"/><rect x="284.80" y="480.4" width="1" height="3.6" fill="#22c822"/><rect x="289.65" y="481.5" width="0.9" height="1.9" fill="#1a9a1a"/><rect x="294.45" y="481.5" width="0.9" height="1.9" fill="#1a9a1a"/><rect x="299.25" y="481.5" width="0.9" height="1.9" fill="#1a9a1a"/><rect x="304.05" y="481.5" width="0.9" height="1.9" fill="#1a9a1a"/><rect x="308.85" y="481.5" width="0.9" height="1.9" fill="#1a9a1a"/><rect x="313.65" y="481.5" width="0.9" height="1.9" fill="#1a9a1a"/><rect x="318.45" y="481.5" width="0.9" height="1.9" fill="#1a9a1a"/><rect x="323.25" y="481.5" width="0.9" height="1.9" fill="#1a9a1a"/><rect x="328.05" y="481.5" width="0.9" height="1.9" fill="#1a9a1a"/><rect x="332.80" y="480.4" width="1" height="3.6" fill="#22c822"/><rect x="337.65" y="481.5" width="0.9" height="1.9" fill="#1a9a1a"/><rect x="342.45" y="481.5" width="0.9" height="1.9" fill="#1a9a1a"/><rect x="347.25" y="481.5" width="0.9" height="1.9" fill="#1a9a1a"/><rect x="352.05" y="481.5" width="0.9" height="1.9" fill="#1a9a1a"/><rect x="356.85" y="481.5" width="0.9" height="1.9" fill="#1a9a1a"/><rect x="361.65" y="481.5" width="0.9" height="1.9" fill="#1a9a1a"/><rect x="366.45" y="481.5" width="0.9" height="1.9" fill="#1a9a1a"/><rect x="371.25" y="481.5" width="0.9" height="1.9" fill="#1a9a1a"/><rect x="376.05" y="481.5" width="0.9" height="1.9" fill="#1a9a1a"/><rect x="380.80" y="480.4" width="1" height="3.6" fill="#22c822"/><rect x="385.65" y="481.5" width="0.9" height="1.9" fill="#1a9a1a"/><rect x="390.45" y="481.5" width="0.9" height="1.9" fill="#1a9a1a"/><rect x="395.25" y="481.5" width="0.9" height="1.9" fill="#1a9a1a"/><rect x="400.05" y="481.5" width="0.9" height="1.9" fill="#1a9a1a"/><rect x="404.85" y="481.5" width="0.9" height="1.9" fill="#1a9a1a"/><rect x="409.65" y="481.5" width="0.9" height="1.9" fill="#1a9a1a"/><rect x="414.45" y="481.5" width="0.9" height="1.9" fill="#1a9a1a"/><rect x="419.25" y="481.5" width="0.9" height="1.9" fill="#1a9a1a"/><rect x="424.05" y="481.5" width="0.9" height="1.9" fill="#1a9a1a"/><rect x="428.80" y="480.4" width="1" height="3.6" fill="#22c822"/><rect x="433.65" y="481.5" width="0.9" height="1.9" fill="#1a9a1a"/><rect x="438.45" y="481.5" width="0.9" height="1.9" fill="#1a9a1a"/><rect x="443.25" y="481.5" width="0.9" height="1.9" fill="#1a9a1a"/><rect x="448.05" y="481.5" width="0.9" height="1.9" fill="#1a9a1a"/><rect x="452.85" y="481.5" width="0.9" height="1.9" fill="#1a9a1a"/><rect x="457.65" y="481.5" width="0.9" height="1.9" fill="#1a9a1a"/><rect x="462.45" y="481.5" width="0.9" height="1.9" fill="#1a9a1a"/><rect x="467.25" y="481.5" width="0.9" height="1.9" fill="#1a9a1a"/><rect x="472.05" y="481.5" width="0.9" height="1.9" fill="#1a9a1a"/><rect x="476.80" y="480.4" width="1" height="3.6" fill="#22c822"/><rect x="481.65" y="481.5" width="0.9" height="1.9" fill="#1a9a1a"/><rect x="486.45" y="481.5" width="0.9" height="1.9" fill="#1a9a1a"/><rect x="491.25" y="481.5" width="0.9" height="1.9" fill="#1a9a1a"/><rect x="496.05" y="481.5" width="0.9" height="1.9" fill="#1a9a1a"/><rect x="500.85" y="481.5" width="0.9" height="1.9" fill="#1a9a1a"/><rect x="505.65" y="481.5" width="0.9" height="1.9" fill="#1a9a1a"/><rect x="510.45" y="481.5" width="0.9" height="1.9" fill="#1a9a1a"/><rect x="515.25" y="481.5" width="0.9" height="1.9" fill="#1a9a1a"/><rect x="520.05" y="481.5" width="0.9" height="1.9" fill="#1a9a1a"/><rect x="524.80" y="480.4" width="1" height="3.6" fill="#22c822"/><rect x="529.65" y="481.5" width="0.9" height="1.9" fill="#1a9a1a"/><rect x="534.45" y="481.5" width="0.9" height="1.9" fill="#1a9a1a"/><rect x="539.25" y="481.5" width="0.9" height="1.9" fill="#1a9a1a"/><rect x="544.05" y="481.5" width="0.9" height="1.9" fill="#1a9a1a"/><rect x="548.85" y="481.5" width="0.9" height="1.9" fill="#1a9a1a"/><rect x="553.65" y="481.5" width="0.9" height="1.9" fill="#1a9a1a"/><rect x="558.45" y="481.5" width="0.9" height="1.9" fill="#1a9a1a"/><rect x="563.25" y="481.5" width="0.9" height="1.9" fill="#1a9a1a"/><rect x="568.05" y="481.5" width="0.9" height="1.9" fill="#1a9a1a"/><rect x="572.80" y="480.4" width="1" height="3.6" fill="#22c822"/><rect x="577.65" y="481.5" width="0.9" height="1.9" fill="#1a9a1a"/><rect x="582.45" y="481.5" width="0.9" height="1.9" fill="#1a9a1a"/><rect x="587.25" y="481.5" width="0.9" height="1.9" fill="#1a9a1a"/><rect x="592.05" y="481.5" width="0.9" height="1.9" fill="#1a9a1a"/><rect x="596.85" y="481.5" width="0.9" height="1.9" fill="#1a9a1a"/><rect x="601.65" y="481.5" width="0.9" height="1.9" fill="#1a9a1a"/><rect x="606.45" y="481.5" width="0.9" height="1.9" fill="#1a9a1a"/><rect x="611.25" y="481.5" width="0.9" height="1.9" fill="#1a9a1a"/><rect x="616.05" y="481.5" width="0.9" height="1.9" fill="#1a9a1a"/><rect x="620.80" y="480.4" width="1" height="3.6" fill="#22c822"/><rect x="625.65" y="481.5" width="0.9" height="1.9" fill="#1a9a1a"/><rect x="630.45" y="481.5" width="0.9" height="1.9" fill="#1a9a1a"/><rect x="635.25" y="481.5" width="0.9" height="1.9" fill="#1a9a1a"/><rect x="640.05" y="481.5" width="0.9" height="1.9" fill="#1a9a1a"/><rect x="644.85" y="481.5" width="0.9" height="1.9" fill="#1a9a1a"/><rect x="649.65" y="481.5" width="0.9" height="1.9" fill="#1a9a1a"/><rect x="654.45" y="481.5" width="0.9" height="1.9" fill="#1a9a1a"/><rect x="659.25" y="481.5" width="0.9" height="1.9" fill="#1a9a1a"/><rect x="664.05" y="481.5" width="0.9" height="1.9" fill="#1a9a1a"/><rect x="668.80" y="480.4" width="1" height="3.6" fill="#22c822"/><rect x="673.65" y="481.5" width="0.9" height="1.9" fill="#1a9a1a"/><rect x="678.45" y="481.5" width="0.9" height="1.9" fill="#1a9a1a"/><rect x="683.25" y="481.5" width="0.9" height="1.9" fill="#1a9a1a"/><rect x="688.05" y="481.5" width="0.9" height="1.9" fill="#1a9a1a"/><rect x="692.85" y="481.5" width="0.9" height="1.9" fill="#1a9a1a"/><rect x="697.65" y="481.5" width="0.9" height="1.9" fill="#1a9a1a"/><rect x="702.45" y="481.5" width="0.9" height="1.9" fill="#1a9a1a"/><rect x="707.25" y="481.5" width="0.9" height="1.9" fill="#1a9a1a"/><rect x="712.05" y="481.5" width="0.9" height="1.9" fill="#1a9a1a"/><rect x="716.80" y="480.4" width="1" height="3.6" fill="#22c822"/><rect x="721.65" y="481.5" width="0.9" height="1.9" fill="#1a9a1a"/><rect x="726.45" y="481.5" width="0.9" height="1.9" fill="#1a9a1a"/><rect x="731.25" y="481.5" width="0.9" height="1.9" fill="#1a9a1a"/><rect x="736.05" y="481.5" width="0.9" height="1.9" fill="#1a9a1a"/><rect x="740.85" y="481.5" width="0.9" height="1.9" fill="#1a9a1a"/><rect x="745.65" y="481.5" width="0.9" height="1.9" fill="#1a9a1a"/><rect x="750.45" y="481.5" width="0.9" height="1.9" fill="#1a9a1a"/><rect x="755.25" y="481.5" width="0.9" height="1.9" fill="#1a9a1a"/><rect x="760.05" y="481.5" width="0.9" height="1.9" fill="#1a9a1a"/><rect x="764.80" y="480.4" width="1" height="3.6" fill="#22c822"/><rect x="769.65" y="481.5" width="0.9" height="1.9" fill="#1a9a1a"/><rect x="774.45" y="481.5" width="0.9" height="1.9" fill="#1a9a1a"/><rect x="779.25" y="481.5" width="0.9" height="1.9" fill="#1a9a1a"/><rect x="784.05" y="481.5" width="0.9" height="1.9" fill="#1a9a1a"/><rect x="788.85" y="481.5" width="0.9" height="1.9" fill="#1a9a1a"/><rect x="793.65" y="481.5" width="0.9" height="1.9" fill="#1a9a1a"/><rect x="798.45" y="481.5" width="0.9" height="1.9" fill="#1a9a1a"/><rect x="803.25" y="481.5" width="0.9" height="1.9" fill="#1a9a1a"/><rect x="808.05" y="481.5" width="0.9" height="1.9" fill="#1a9a1a"/><rect x="812.80" y="480.4" width="1" height="3.6" fill="#22c822"/><rect x="817.65" y="481.5" width="0.9" height="1.9" fill="#1a9a1a"/><rect x="822.45" y="481.5" width="0.9" height="1.9" fill="#1a9a1a"/><rect x="827.25" y="481.5" width="0.9" height="1.9" fill="#1a9a1a"/><rect x="832.05" y="481.5" width="0.9" height="1.9" fill="#1a9a1a"/><rect x="836.85" y="481.5" width="0.9" height="1.9" fill="#1a9a1a"/><rect x="841.65" y="481.5" width="0.9" height="1.9" fill="#1a9a1a"/><rect x="846.45" y="481.5" width="0.9" height="1.9" fill="#1a9a1a"/><rect x="851.25" y="481.5" width="0.9" height="1.9" fill="#1a9a1a"/><rect x="856.05" y="481.5" width="0.9" height="1.9" fill="#1a9a1a"/><rect x="860.80" y="480.4" width="1" height="3.6" fill="#22c822"/><rect x="865.65" y="481.5" width="0.9" height="1.9" fill="#1a9a1a"/><rect x="870.45" y="481.5" width="0.9" height="1.9" fill="#1a9a1a"/><rect x="875.25" y="481.5" width="0.9" height="1.9" fill="#1a9a1a"/><rect x="880.05" y="481.5" width="0.9" height="1.9" fill="#1a9a1a"/><rect x="884.85" y="481.5" width="0.9" height="1.9" fill="#1a9a1a"/><rect x="889.65" y="481.5" width="0.9" height="1.9" fill="#1a9a1a"/><rect x="894.45" y="481.5" width="0.9" height="1.9" fill="#1a9a1a"/><rect x="899.25" y="481.5" width="0.9" height="1.9" fill="#1a9a1a"/><rect x="904.05" y="481.5" width="0.9" height="1.9" fill="#1a9a1a"/><rect x="908.80" y="480.4" width="1" height="3.6" fill="#22c822"/><rect x="913.65" y="481.5" width="0.9" height="1.9" fill="#1a9a1a"/><rect x="918.45" y="481.5" width="0.9" height="1.9" fill="#1a9a1a"/><rect x="923.25" y="481.5" width="0.9" height="1.9" fill="#1a9a1a"/><rect x="928.05" y="481.5" width="0.9" height="1.9" fill="#1a9a1a"/><rect x="932.85" y="481.5" width="0.9" height="1.9" fill="#1a9a1a"/><rect x="937.65" y="481.5" width="0.9" height="1.9" fill="#1a9a1a"/><rect x="942.45" y="481.5" width="0.9" height="1.9" fill="#1a9a1a"/><rect x="947.25" y="481.5" width="0.9" height="1.9" fill="#1a9a1a"/><rect x="952.05" y="481.5" width="0.9" height="1.9" fill="#1a9a1a"/><rect x="956.80" y="480.4" width="1" height="3.6" fill="#22c822"/><rect x="961.65" y="481.5" width="0.9" height="1.9" fill="#1a9a1a"/><rect x="966.45" y="481.5" width="0.9" height="1.9" fill="#1a9a1a"/><rect x="971.25" y="481.5" width="0.9" height="1.9" fill="#1a9a1a"/><rect x="976.05" y="481.5" width="0.9" height="1.9" fill="#1a9a1a"/><rect x="980.85" y="481.5" width="0.9" height="1.9" fill="#1a9a1a"/><rect x="141" y="490.9" width="842.4" height="0.7" fill="#8c8c8c"/></svg><div class="a" style="left:141px;top:482px;width:843px;height:9px;overflow:hidden"><div class="t" style="left:-6.50px;top:4px;font-size:6.4px;color:#1ec81e;-webkit-text-stroke:0.12px #1ec81e;transform:scaleX(0.88);transform-origin:0 0">0.0000 ms</div><div class="t" style="left:83.10px;top:4px;font-size:6.4px;color:#1ec81e;-webkit-text-stroke:0.12px #1ec81e;transform:scaleX(0.88);transform-origin:0 0">0.0001 ms</div><div class="t" style="left:179.10px;top:4px;font-size:6.4px;color:#1ec81e;-webkit-text-stroke:0.12px #1ec81e;transform:scaleX(0.88);transform-origin:0 0">0.0002 ms</div><div class="t" style="left:275.10px;top:4px;font-size:6.4px;color:#1ec81e;-webkit-text-stroke:0.12px #1ec81e;transform:scaleX(0.88);transform-origin:0 0">0.0003 ms</div><div class="t" style="left:371.10px;top:4px;font-size:6.4px;color:#1ec81e;-webkit-text-stroke:0.12px #1ec81e;transform:scaleX(0.88);transform-origin:0 0">0.0004 ms</div><div class="t" style="left:467.10px;top:4px;font-size:6.4px;color:#1ec81e;-webkit-text-stroke:0.12px #1ec81e;transform:scaleX(0.88);transform-origin:0 0">0.0005 ms</div><div class="t" style="left:563.10px;top:4px;font-size:6.4px;color:#1ec81e;-webkit-text-stroke:0.12px #1ec81e;transform:scaleX(0.88);transform-origin:0 0">0.0006 ms</div><div class="t" style="left:659.10px;top:4px;font-size:6.4px;color:#1ec81e;-webkit-text-stroke:0.12px #1ec81e;transform:scaleX(0.88);transform-origin:0 0">0.0007 ms</div><div class="t" style="left:755.10px;top:4px;font-size:6.4px;color:#1ec81e;-webkit-text-stroke:0.12px #1ec81e;transform:scaleX(0.88);transform-origin:0 0">0.0008 ms</div></div><div class="a" style="left:985px;top:72px;width:11.6px;height:439.5px;background:#f0f0f0"></div><div class="a" style="left:985px;top:72px;width:2px;height:439.5px;background:#e2e2e2"></div><div class="a" style="left:994px;top:83px;width:1px;height:395px;background:#a0a0a0"></div><div class="a" style="left:995px;top:72px;width:1px;height:439.5px;background:#fff"></div><div class="a" style="left:987.1px;top:72px;width:7.8px;height:9.5px;background:#8c8c8c"></div><div class="a" style="left:987.1px;top:83.2px;width:7.8px;height:8.3px;background:#fafafa;box-shadow:inset -0.6px -0.8px 0 #b8b8b8"></div><div class="a" style="left:987.2px;top:469.5px;width:7.6px;height:6.2px;background:#fafafa;box-shadow:0 0 0 0.5px #b8b8b8"></div><svg class="a" style="left:987.1px;top:83.2px" width="7.8" height="8.3" viewBox="0 0 7.8 8.3"><path d="M2.1 5.6L3.9 3.6L5.7 5.6Z" fill="#111"/></svg><svg class="a" style="left:987.2px;top:469.5px" width="7.6" height="6.2" viewBox="0 0 7.6 6.2"><path d="M2 2.2L3.8 4.2L5.6 2.2Z" fill="#111"/></svg><div class="a" style="left:987px;top:480px;width:8px;height:20px;background:#8c8c8c"></div><div class="a" style="left:987px;top:502px;width:8px;height:8.8px;background:#8c8c8c"></div><div class="a" style="left:1.5px;top:500px;width:983.5px;height:10.5px;background:#f0f0f0"></div><div class="a" style="left:2.5px;top:499.8px;width:982.5px;height:2.2px;background:#cacaca"></div><div class="a" style="left:138px;top:500px;width:2px;height:11px;background:#d8d8d8"></div><div class="a" style="left:2.5px;top:502px;width:82.5px;height:8.8px;background:#f2f2f2"></div><div class="a" style="left:2.7px;top:502px;width:4.2px;height:8.8px;background:#6c6c6c"></div><div class="a" style="left:6.9px;top:502px;width:7.2px;height:8.8px;background:#fafafa"></div><svg class="a" style="left:6.9px;top:502px" width="7.2" height="8.8" viewBox="0 0 7.2 8.8"><path d="M4.4 2.8L2.6 4.4L4.4 6Z" fill="#777"/></svg><div class="a" style="left:14.1px;top:502px;width:1.6px;height:8.8px;background:#808080"></div><div class="a" style="left:15.8px;top:502px;width:57px;height:8.8px;background:#f2f2f2;box-shadow:inset -0.8px -0.8px 0 #6a6a6a"></div><div class="a" style="left:75.6px;top:502px;width:8.9px;height:8.8px;background:#fafafa;box-shadow:inset -0.8px -0.8px 0 #6a6a6a"></div><svg class="a" style="left:75.6px;top:502px" width="8.9" height="8.8" viewBox="0 0 8.9 8.8"><path d="M3.6 2.8L5.4 4.4L3.6 6Z" fill="#777"/></svg><div class="a" style="left:86.3px;top:502px;width:51.7px;height:8.8px;background:#f2f2f2"></div><div class="a" style="left:86.3px;top:502px;width:8.4px;height:8.8px;background:#fafafa;box-shadow:inset -0.8px -0.8px 0 #6a6a6a"></div><svg class="a" style="left:86.3px;top:502px" width="8.4" height="8.8" viewBox="0 0 8.4 8.8"><path d="M4.8 2.8L3 4.4L4.8 6Z" fill="#777"/></svg><div class="a" style="left:94.7px;top:502px;width:34.4px;height:8.8px;background:#f4f4f4"></div><div class="a" style="left:129.1px;top:502px;width:8.3px;height:8.8px;background:#fafafa;box-shadow:inset -0.8px -0.8px 0 #6a6a6a"></div><svg class="a" style="left:129.1px;top:502px" width="8.3" height="8.8" viewBox="0 0 8.3 8.8"><path d="M3.6 2.8L5.4 4.4L3.6 6Z" fill="#777"/></svg><div class="a" style="left:140px;top:500px;width:844.9px;height:11.5px;background:#c8c8c8"></div><div class="a" style="left:140px;top:500px;width:844.9px;height:1.6px;background:#d8d8d8"></div><div class="a" style="left:140px;top:501.6px;width:844.9px;height:1.1px;background:#a4a4a4"></div><div class="a" style="left:140px;top:502.7px;width:844.9px;height:1px;background:#d2d2d2"></div><div class="a" style="left:140px;top:510px;width:844.9px;height:1.5px;background:#d0d0d0"></div><div class="a" style="left:140.8px;top:502.8px;width:6.5px;height:7.4px;background:#fbfbfb;box-shadow:inset -0.7px -0.7px 0 #9a9a9a"></div><div class="a" style="left:148.9px;top:502.8px;width:3.6px;height:7.4px;background:#fbfbfb;box-shadow:inset -0.7px -0.7px 0 #9a9a9a"></div><div class="a" style="left:976.2px;top:502.8px;width:6.8px;height:7.5px;background:#fbfbfb;box-shadow:inset 0.8px 0 0 #e8d070,inset -0.6px -0.6px 0 #888"></div><svg class="a" style="left:140.8px;top:502.8px" width="6.5" height="7.4" viewBox="0 0 6.5 7.4"><path d="M4.6 1.8L2.2 3.6L4.6 5.4Z" fill="#111"/></svg><svg class="a" style="left:976.2px;top:502.8px" width="6.8" height="7.5" viewBox="0 0 6.8 7.5"><path d="M2.6 2L4.8 3.8L2.6 5.6Z" fill="#111"/></svg><div class="a" style="left:1px;top:511px;width:995.6px;height:12px;background:#f0f0f0"></div><div class="a" style="left:1.5px;top:511.5px;width:994.5px;height:2px;background:linear-gradient(#dcdcdc,#f4f4f4)"></div><div class="a" style="left:89.6px;top:512px;width:0.8px;height:10px;background:#d4d4d4"></div><div class="t" style="left:5px;top:515px;font-size:6.4px;color:#101010;transform:scaleX(0.8902);transform-origin:0 0;">0 ps to 877300 ps</div><div class="a" style="left:1px;top:521.6px;width:995.6px;height:1px;background:#f6f6f6"></div><div class="a" style="left:0px;top:523px;width:998px;height:1px;background:#a2a6ac"></div><svg class="a" style="left:988px;top:516px" width="7" height="6" viewBox="0 0 7 6"><path d="M6.5 0.5L0.5 5.5M6.5 2.5L2.5 5.5M6.5 4.5L4.5 5.5" stroke="#b0b0b0" stroke-width="0.6"/></svg>
</body></html>
